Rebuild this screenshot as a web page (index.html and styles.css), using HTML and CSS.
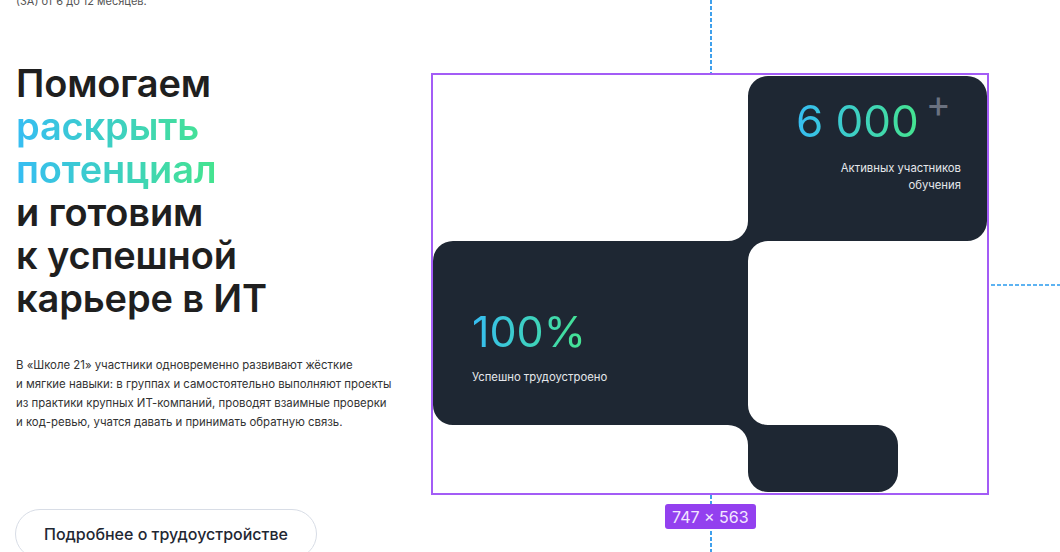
FILE: index.html
```html
<!DOCTYPE html>
<html lang="ru">
<head>
<meta charset="utf-8">
<title>Школа 21</title>
<link rel="stylesheet" href="styles.css">
</head>
<body>
<main class="page">
  <section class="intro">
    <p class="note">(ЗА) от 6 до 12 месяцев.</p>
    <h1 class="title">Помогаем<br><span class="grad">раскрыть<br>потенциал</span><br>и готовим<br>к успешной<br>карьере в ИТ</h1>
    <p class="lead">В «Школе 21» участники одновременно развивают жёсткие<br>и мягкие навыки: в группах и самостоятельно выполняют проекты<br>из практики крупных ИТ-компаний, проводят взаимные проверки<br>и код-ревью, учатся давать и принимать обратную связь.</p>
    <a class="btn" href="#">Подробнее о трудоустройстве</a>
  </section>
  <section class="visual">
    <svg class="shape" viewBox="433 75 554 418" width="554" height="418" aria-hidden="true">
      <path fill="#1e2733" d="M748 96 A20 20 0 0 1 768 76 H967 A20 20 0 0 1 987 96 V221 A20 20 0 0 1 967 241 H768 A20 20 0 0 0 748 261 V405 A20 20 0 0 0 768 425 H878 A20 20 0 0 1 898 445 V472 A20 20 0 0 1 878 492 H768 A20 20 0 0 1 748 472 V445 A20 20 0 0 0 728 425 H453 A20 20 0 0 1 433 405 V261 A20 20 0 0 1 453 241 H728 A20 20 0 0 0 748 221 Z"/>
    </svg>
    <div class="stat stat-a">
      <div class="num"><span class="grad">6 000</span><span class="plus">+</span></div>
      <div class="cap">Активных участников<br>обучения</div>
    </div>
    <div class="stat stat-b">
      <div class="num"><span class="grad">100%</span></div>
      <div class="cap">Успешно трудоустроено</div>
    </div>
    <span class="guide guide-top"></span>
    <span class="guide guide-bottom"></span>
    <span class="guide guide-right"></span>
    <span class="size-tag">747 × 563</span>
  </section>
</main>
</body>
</html>
```

FILE: styles.css
```css
* { box-sizing: border-box; }
html, body { margin: 0; padding: 0; }
body {
  width: 1060px;
  height: 552px;
  overflow: hidden;
  background: #ffffff;
  font-family: Inter, "Noto Sans", sans-serif;
  color: #1f1f1f;
}
.page {
  display: flex;
  align-items: flex-start;
}
.intro {
  width: 431px;
  flex: none;
  padding-left: 16px;
  display: flex;
  flex-direction: column;
  align-items: flex-start;
}
.note {
  margin: -7px 0 0;
  font-size: 11px;
  line-height: 16px;
  color: #555;
}
.title {
  margin: 53px 0 0;
  font-size: 38px;
  line-height: 43px;
  font-weight: 600;
  letter-spacing: -0.15px;
  color: #1f1f1f;
}
.grad {
  background: linear-gradient(90deg, #36bdf3 0%, #45e48f 100%);
  -webkit-background-clip: text;
  background-clip: text;
  color: transparent;
}
.title .grad { display: inline-block; }
.lead {
  margin: 36px 0 0;
  font-size: 11.4px;
  line-height: 19px;
  color: #333;
}
.btn {
  margin-top: 77px;
  margin-left: -1px;
  display: inline-flex;
  align-items: center;
  height: 50px;
  padding: 0 28px;
  border: 1px solid #d8dde6;
  border-radius: 25px;
  font-size: 16px;
  font-weight: 500;
  color: #1f2733;
  text-decoration: none;
}
.visual {
  position: relative;
  margin-top: 73px;
  width: 558px;
  height: 422px;
  border: 2px solid #a35cf6;
  flex: none;
}
.shape { display: block; }
.stat {
  position: absolute;
  color: #e8eaee;
}
.num {
  font-size: 44px;
  line-height: 44px;
  font-weight: 400;
  white-space: nowrap;
}
.cap {
  font-size: 11.3px;
  line-height: 17px;
  color: #e5e7eb;
}
.stat-a {
  top: 24px;
  right: 26px;
  text-align: right;
}
.stat-a .num { margin-right: 10px; }
.stat-a .cap { margin-top: 17px; }
.plus {
  display: inline-block;
  vertical-align: top;
  margin-left: 7px;
  margin-top: -15px;
  font-size: 38px;
  line-height: 38px;
  color: #6b7280;
}
.stat-b {
  top: 234px;
  left: 39px;
}
.stat-b .num { font-size: 43px; }
.stat-b .cap { margin-top: 16px; }
.guide { position: absolute; display: block; }
.guide-top, .guide-bottom {
  left: 277px;
  width: 2px;
  background: repeating-linear-gradient(180deg, #3fa0ec 0 4px, transparent 4px 6px);
}
.guide-top { top: -75px; height: 73px; }
.guide-bottom { top: 420px; height: 60px; }
.guide-right {
  top: 209px;
  left: 558px;
  width: 80px;
  height: 2px;
  background: repeating-linear-gradient(90deg, #5db3f2 0 4px, transparent 4px 6px);
}
.size-tag {
  position: absolute;
  left: 232px;
  top: 429px;
  height: 25px;
  padding: 0 7px;
  display: flex;
  align-items: center;
  background: #9340ef;
  color: #f3e8ff;
  border-radius: 3px;
  font-size: 16px;
  line-height: 1;
  white-space: nowrap;
}
```
